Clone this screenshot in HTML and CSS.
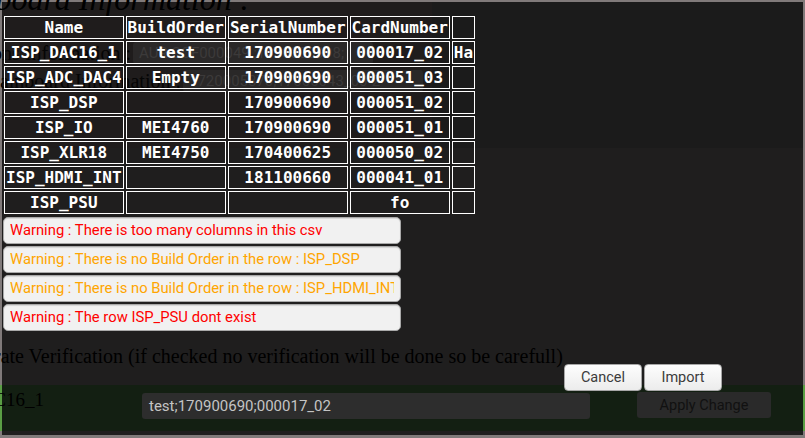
FILE: index.html
```html
<!DOCTYPE html>
<html lang="en">
<head>
<meta charset="utf-8">
<title>CSV import</title>
<link rel="stylesheet" href="styles.css">
</head>
<body>
<div class="screen">
  <div class="top">
    <div class="top-left">
      <h1 class="heading">Mainboard Information :</h1>
      <div class="field field-1">
        <span class="field-label">Card Options Information :</span>
        <span class="field-input">AUR CCF000049 ;1470300998;</span>
      </div>
      <div class="field field-2">
        <span class="field-label field-label-wide">Mainboard Information :</span>
        <span class="field-input">1720005870;17000043_00-2</span>
      </div>
    </div>
  </div>

  <p class="verify">rate Verification (if checked no verification will be done so be carefull)</p>

  <div class="bar">
    <div class="bar-label"><span>ISP_DAC16_1</span></div>
    <div class="bar-input">test;170900690;000017_02</div>
    <div class="bar-button">Apply Change</div>
  </div>

  <div class="modal">
    <table class="csv-table">
      <thead>
        <tr><th>Name</th><th>BuildOrder</th><th>SerialNumber</th><th>CardNumber</th><th></th></tr>
      </thead>
      <tbody>
        <tr><td>ISP_DAC16_1</td><td>test</td><td>170900690</td><td>000017_02</td><td>Ha</td></tr>
        <tr><td>ISP_ADC_DAC4</td><td>Empty</td><td>170900690</td><td>000051_03</td><td></td></tr>
        <tr><td>ISP_DSP</td><td></td><td>170900690</td><td>000051_02</td><td></td></tr>
        <tr><td>ISP_IO</td><td>MEI4760</td><td>170900690</td><td>000051_01</td><td></td></tr>
        <tr><td>ISP_XLR18</td><td>MEI4750</td><td>170400625</td><td>000050_02</td><td></td></tr>
        <tr><td>ISP_HDMI_INT</td><td></td><td>181100660</td><td>000041_01</td><td></td></tr>
        <tr><td>ISP_PSU</td><td></td><td></td><td>fo</td><td></td></tr>
      </tbody>
    </table>

    <div class="warnings">
      <div class="warning warning-error"><span class="warning-text">Warning : There is too many columns in this csv</span></div>
      <div class="warning warning-missing"><span class="warning-text">Warning : There is no Build Order in the row : ISP_DSP</span></div>
      <div class="warning warning-missing"><span class="warning-text">Warning : There is no Build Order in the row : ISP_HDMI_INT</span></div>
      <div class="warning warning-error"><span class="warning-text">Warning : The row ISP_PSU dont exist</span></div>
    </div>

    <div class="actions">
      <button class="btn" type="button">Cancel</button>
      <button class="btn" type="button">Import</button>
    </div>
  </div>
</div>
</body>
</html>
```

FILE: styles.css
```css
* {
  box-sizing: border-box;
}

html,
body {
  margin: 0;
  height: 100%;
}

body {
  background: #807a7a;
  overflow: hidden;
  font-family: "Liberation Serif", serif;
  color: #000;
}

.screen {
  position: relative;
  margin: 2px 2px 0;
  height: 433px;
  background: #1f1e1e;
}

/* ---------- page behind the dialog ---------- */

.top {
  display: flex;
  height: 146px;
  background: #1b1b1b;
}

.top-left {
  width: 430px;
  background: #1f1c1c;
}

.heading {
  margin: -21px 0 0 -74px;
  font: italic 400 32px/37px "Liberation Serif", serif;
  white-space: nowrap;
  color: #000;
}

.field {
  display: flex;
  align-items: center;
  height: 22px;
  font-size: 20px;
}

.field-1 {
  margin-top: 24px;
}

.field-2 {
  margin-top: 6px;
}

.field-label {
  display: flex;
  justify-content: flex-end;
  width: 129px;
  white-space: nowrap;
  color: #050505;
}

.field-label-wide {
  width: 179px;
}

.field-input {
  margin-left: 2px;
  width: 240px;
  height: 22px;
  padding-left: 6px;
  border-radius: 3px;
  background: #2a2828;
  color: #3c3a3a;
  font: 15px/22px "Roboto", sans-serif;
  white-space: nowrap;
  overflow: hidden;
}

.verify {
  margin: 197px 0 0 -8px;
  font-size: 20px;
  line-height: 23px;
  white-space: nowrap;
  color: #000;
}

.bar {
  display: flex;
  align-items: flex-start;
  margin: 17px -2px 0;
  height: 46px;
  padding-top: 8px;
  background: #131f12;
  border-left: 2px solid #5a9e44;
  border-right: 2px solid #5a9e44;
}

.bar-label {
  display: flex;
  justify-content: flex-end;
  width: 42px;
  margin-top: -4px;
  font-size: 19px;
  line-height: 22px;
  white-space: nowrap;
  color: #000;
}

.bar-input {
  margin-left: 98px;
  width: 448px;
  height: 26px;
  padding-left: 7px;
  border-radius: 3px;
  background: #2d2d2d;
  color: #c4c4c4;
  font: 15px/26px "Roboto", sans-serif;
}

.bar-button {
  margin: -1px 0 0 47px;
  width: 134px;
  height: 26px;
  border-radius: 3px;
  background: #2a2a2a;
  color: #111;
  font: 14.5px/27px "Roboto", sans-serif;
  text-align: center;
}

/* ---------- dialog ---------- */

.modal {
  position: absolute;
  top: 12px;
  left: 0;
}

.csv-table {
  border-spacing: 2px;
  font: 700 16px "DejaVu Sans Mono", monospace;
  color: #fff;
}

.csv-table th,
.csv-table td {
  border: 1px solid #fff;
  padding: 1px;
  text-align: center;
  font-weight: 700;
  white-space: nowrap;
}

.warnings {
  display: flex;
  flex-direction: column;
  gap: 2px;
  width: 398px;
  margin: 1px 0 0 1px;
}

.warning {
  height: 27px;
  padding: 0 6px;
  border: 1px solid #a9a9a9;
  border-radius: 5px;
  background: #f1f1f1;
  box-shadow: inset 0 1px 1px rgba(0, 0, 0, 0.12);
  font: 14.8px/25px "Roboto", sans-serif;
  white-space: nowrap;
}

.warning-text {
  display: block;
  width: 384px;
  overflow: hidden;
}

.warning-error {
  color: #ff0000;
}

.warning-missing {
  color: #ffa500;
}

.actions {
  display: flex;
  justify-content: flex-end;
  gap: 2px;
  width: 720px;
  margin-top: 33px;
}

.btn {
  width: 78px;
  height: 27px;
  padding: 0;
  border: 1px solid #a7a7a7;
  border-radius: 4px;
  background: linear-gradient(#fdfdfd, #ececec);
  color: #3c3c3c;
  font: 14.5px "Roboto", sans-serif;
}
```
